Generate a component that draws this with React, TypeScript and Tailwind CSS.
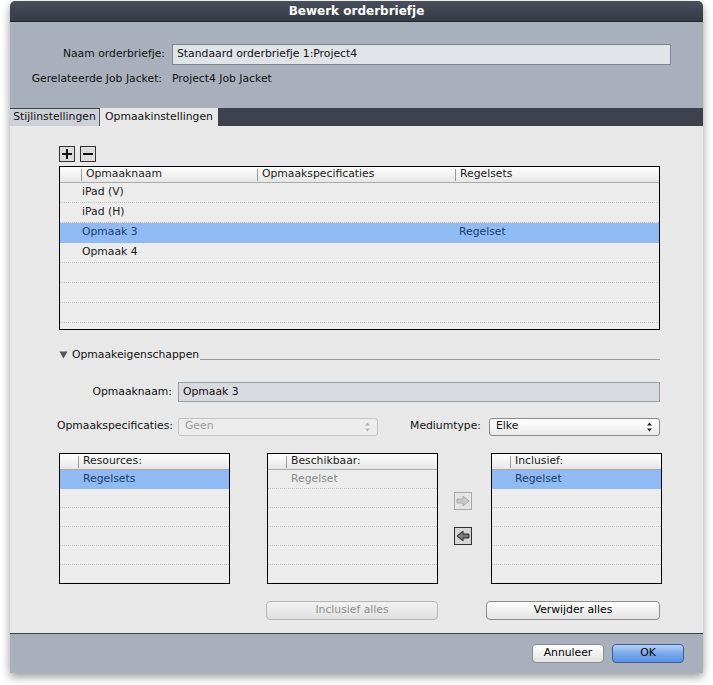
import React from 'react';

const font = { fontFamily: '"DejaVu Sans", "Liberation Sans", sans-serif' };

// Mac-style column header strip with small separators
const HeaderCell: React.FC<{ label: string; w: string }> = ({ label, w }) => (
  <div className={`${w} h-full flex items-center`}>
    <span className="h-[12px] w-px bg-[#9a9a9a] mr-[4px]" />
    <span className="text-[10.8px] text-[#1a1a1a] leading-none">{label}</span>
  </div>
);

const Row: React.FC<{ cells?: string[]; selected?: boolean; muted?: boolean; h?: string }> = ({ cells = [], selected, muted, h = 'h-[20px]' }) => (
  <div
    className={`${h} flex items-center pb-[1px] border-b border-dotted ${selected ? 'bg-[#8fbaf4] border-[#8fbaf4]' : 'border-[#c4c4c4]'}`}
  >
    {cells.map((c, i) => (
      <div
        key={i}
        className={`text-[10.8px] leading-none ${i === 0 ? 'w-[198px] pl-[22px]' : i === 1 ? 'w-[198px] pl-[3px]' : 'pl-[3px]'} ${selected ? 'text-[#1d3c6b]' : muted ? 'text-[#8a8a8a]' : 'text-[#1a1a1a]'}`}
      >
        {c}
      </div>
    ))}
  </div>
);

const SmallList: React.FC<{ title: string; item: string; selected?: boolean; muted?: boolean }> = ({ title, item, selected, muted }) => (
  <div className="w-[171px] h-[131px] border border-black bg-[#ececec] overflow-hidden">
    <div className="h-[16px] bg-gradient-to-b from-white to-[#e6e6e6] border-b border-[#a9a9a9] flex items-center pl-[18px]">
      <span className="h-[12px] w-px bg-[#9a9a9a] mr-[4px]" />
      <span className="text-[10.8px] leading-none text-[#1a1a1a]">{title}</span>
    </div>
    <div className={`h-[19px] flex items-center pl-[23px] border-b border-dotted ${selected ? 'bg-[#8fbaf4] border-[#8fbaf4]' : 'border-[#c4c4c4]'}`}>
      <span className={`text-[10.8px] leading-none ${selected ? 'text-[#1d3c6b]' : muted ? 'text-[#8a8a8a]' : ''}`}>{item}</span>
    </div>
    {[0, 1, 2, 3, 4].map((i) => (
      <div key={i} className="h-[19px] border-b border-dotted border-[#c4c4c4]" />
    ))}
  </div>
);

const UpDown: React.FC<{ color: string }> = ({ color }) => (
  <svg width="7" height="10" viewBox="0 0 7 10">
    <path d="M3.5 0.5 L6 3.5 H1 Z" fill={color} />
    <path d="M3.5 9.5 L6 6.5 H1 Z" fill={color} />
  </svg>
);

const ArrowBtn: React.FC<{ dir: 'left' | 'right'; disabled?: boolean }> = ({ dir, disabled }) => (
  <div
    className={`w-[18px] h-[18px] border flex items-center justify-center ${disabled ? 'border-[#a8a8a8] bg-[#e4e4e4]' : 'border-[#2e2e2e] bg-[#d6d6d6]'}`}
  >
    <svg width="14" height="12" viewBox="0 0 14 12">
      {dir === 'right' ? (
        <path d="M1 4 H7 V1 L13 6 L7 11 V8 H1 Z" fill="#c8c8c8" stroke="#a0a0a0" strokeWidth="0.8" />
      ) : (
        <path d="M13 4 H7 V1 L1 6 L7 11 V8 H13 Z" fill="#7a7a7a" stroke="#1a1a1a" strokeWidth="0.9" />
      )}
    </svg>
  </div>
);

const MacButton: React.FC<{ label: string; w: string; disabled?: boolean; primary?: boolean }> = ({ label, w, disabled, primary }) => (
  <div
    className={`${w} h-[19px] rounded-[4px] border flex items-center justify-center text-[10.8px] leading-none ${
      primary
        ? 'border-[#3b5e9c] bg-gradient-to-b from-[#b9d3f6] via-[#79a8ec] to-[#5b93e6] text-black'
        : disabled
        ? 'border-[#b5b5b5] bg-gradient-to-b from-[#f2f2f2] to-[#e0e0e0] text-[#8e8e8e]'
        : 'border-[#8c8c8c] bg-gradient-to-b from-white to-[#e2e2e2] text-black'
    }`}
  >
    {label}
  </div>
);

export default function App() {
  return (
    <div className="w-[713px] h-[685px] bg-white pl-[10px] pt-[1px]" style={font}>
      <div className="w-[693px] rounded-t-[5px] overflow-hidden shadow-[0_4px_10px_rgba(0,0,0,0.4)]">
        {/* Title bar */}
        <div className="h-[21px] bg-gradient-to-b from-[#4a4f5c] to-[#363a45] border-b border-[#23262d] flex items-center justify-center">
          <span className="text-white font-bold text-[12px] leading-none">Bewerk orderbriefje</span>
        </div>

        {/* Header */}
        <div className="h-[86px] bg-[#a9b0bc] pt-[22px]">
          <div className="flex items-center h-[21px]">
            <div className="w-[155px] text-right text-[10.8px] text-[#111]">Naam orderbriefje:</div>
            <div className="ml-[7px] w-[499px] h-[21px] bg-[#e0e3e8] border border-[#7f858f] flex items-center px-[4px] text-[10.8px] text-[#111]">
              Standaard orderbriefje 1:Project4
            </div>
          </div>
          <div className="flex items-center h-[16px] mt-[6px]">
            <div className="w-[152px] text-right text-[10.8px] text-[#111]">Gerelateerde Job Jacket:</div>
            <div className="ml-[10px] text-[10.8px] text-[#111]">Project4 Job Jacket</div>
          </div>
        </div>

        {/* Tab bar */}
        <div className="h-[18px] bg-[#3e424c] flex items-end">
          <div className="h-[17px] w-[90px] bg-[#cdd0d6] border-r border-[#555] flex items-center justify-center text-[10.8px] text-[#111]">
            Stijlinstellingen
          </div>
          <div className="h-[18px] w-[118px] bg-[#e8e8e8] flex items-center justify-center text-[10.8px] text-[#111]">
            Opmaakinstellingen
          </div>
        </div>

        {/* Content */}
        <div className="h-[507px] bg-[#e8e8e8] pl-[49px] pt-[20px]">
          <div className="flex gap-[5px]">
            <div className="w-[16px] h-[16px] border border-[#333] bg-[#dcdcdc] flex items-center justify-center">
              <svg width="12" height="12" viewBox="0 0 12 12"><path d="M6 1 V11 M1 6 H11" stroke="#111" strokeWidth="2" /></svg>
            </div>
            <div className="w-[16px] h-[16px] border border-[#333] bg-[#dcdcdc] flex items-center justify-center">
              <svg width="12" height="12" viewBox="0 0 12 12"><path d="M1 6 H11" stroke="#111" strokeWidth="2" /></svg>
            </div>
          </div>

          {/* Main table */}
          <div className="mt-[4px] w-[601px] h-[164px] border border-black bg-[#ececec] overflow-hidden">
            <div className="h-[16px] bg-gradient-to-b from-white to-[#e6e6e6] border-b border-[#a9a9a9] flex pl-[21px]">
              <HeaderCell label="Opmaaknaam" w="w-[176px]" />
              <HeaderCell label="Opmaakspecificaties" w="w-[198px]" />
              <HeaderCell label="Regelsets" w="flex-1" />
            </div>
            <Row cells={['iPad (V)']} />
            <Row cells={['iPad (H)']} />
            <Row cells={['Opmaak 3', '', 'Regelset']} selected />
            <Row cells={['Opmaak 4']} />
            <Row />
            <Row />
            <Row />
          </div>

          {/* Disclosure */}
          <div className="mt-[18px] w-[601px] flex items-center h-[14px]">
            <svg width="9" height="8" viewBox="0 0 9 8" className="mr-[4px]"><path d="M0.5 0.5 H8.5 L4.5 7.5 Z" fill="#555" /></svg>
            <span className="text-[10.8px] leading-none text-[#111]">Opmaakeigenschappen</span>
            <div className="flex-1 h-px bg-[#9a9a9a] mt-[8px] ml-[1px]" />
          </div>

          {/* Opmaaknaam */}
          <div className="mt-[20px] flex items-center h-[20px]">
            <div className="w-[113px] text-right text-[10.8px] text-[#111]">Opmaaknaam:</div>
            <div className="ml-[6px] w-[482px] h-[20px] bg-[#d7dadf] border border-[#9a9ea5] flex items-center px-[4px] text-[10.8px] text-[#111]">
              Opmaak 3
            </div>
          </div>

          {/* Selects */}
          <div className="mt-[15px] flex items-center h-[19px]">
            <div className="w-[113px] -ml-[2px] text-right text-[10.8px] text-[#111] whitespace-nowrap">Opmaakspecificaties:</div>
            <div className="ml-[8px] w-[200px] h-[18px] rounded-[3px] border border-[#c3c3c3] bg-[#ededed] flex items-center justify-between px-[6px] text-[10.8px] text-[#9a9a9a]">
              Geen
              <UpDown color="#b5b5b5" />
            </div>
            <div className="w-[103px] text-right text-[10.8px] text-[#111]">Mediumtype:</div>
            <div className="ml-[8px] w-[171px] h-[18px] rounded-[3px] border border-[#8a8a8a] bg-gradient-to-b from-white to-[#ebebeb] flex items-center justify-between px-[6px] text-[10.8px] text-[#111]">
              Elke
              <UpDown color="#222" />
            </div>
          </div>

          {/* Lists */}
          <div className="mt-[17px] flex items-start">
            <SmallList title="Resources:" item="Regelsets" selected />
            <div className="ml-[37px]">
              <SmallList title="Beschikbaar:" item="Regelset" muted />
            </div>
            <div className="ml-[16px] mt-[39px] flex flex-col gap-[17px]">
              <ArrowBtn dir="right" disabled />
              <ArrowBtn dir="left" />
            </div>
            <div className="ml-[19px]">
              <SmallList title="Inclusief:" item="Regelset" selected />
            </div>
          </div>

          {/* Buttons */}
          <div className="mt-[17px] flex">
            <div className="ml-[207px]">
              <MacButton label="Inclusief alles" w="w-[172px]" disabled />
            </div>
            <div className="ml-[48px]">
              <MacButton label="Verwijder alles" w="w-[174px]" />
            </div>
          </div>
        </div>

        {/* Footer */}
        <div className="h-[40px] bg-[#a9b0bc] border-t border-[#3c3f46] flex items-center justify-end pr-[19px] gap-[8px]">
          <MacButton label="Annuleer" w="w-[72px]" />
          <MacButton label="OK" w="w-[72px]" primary />
        </div>
      </div>
    </div>
  );
}
